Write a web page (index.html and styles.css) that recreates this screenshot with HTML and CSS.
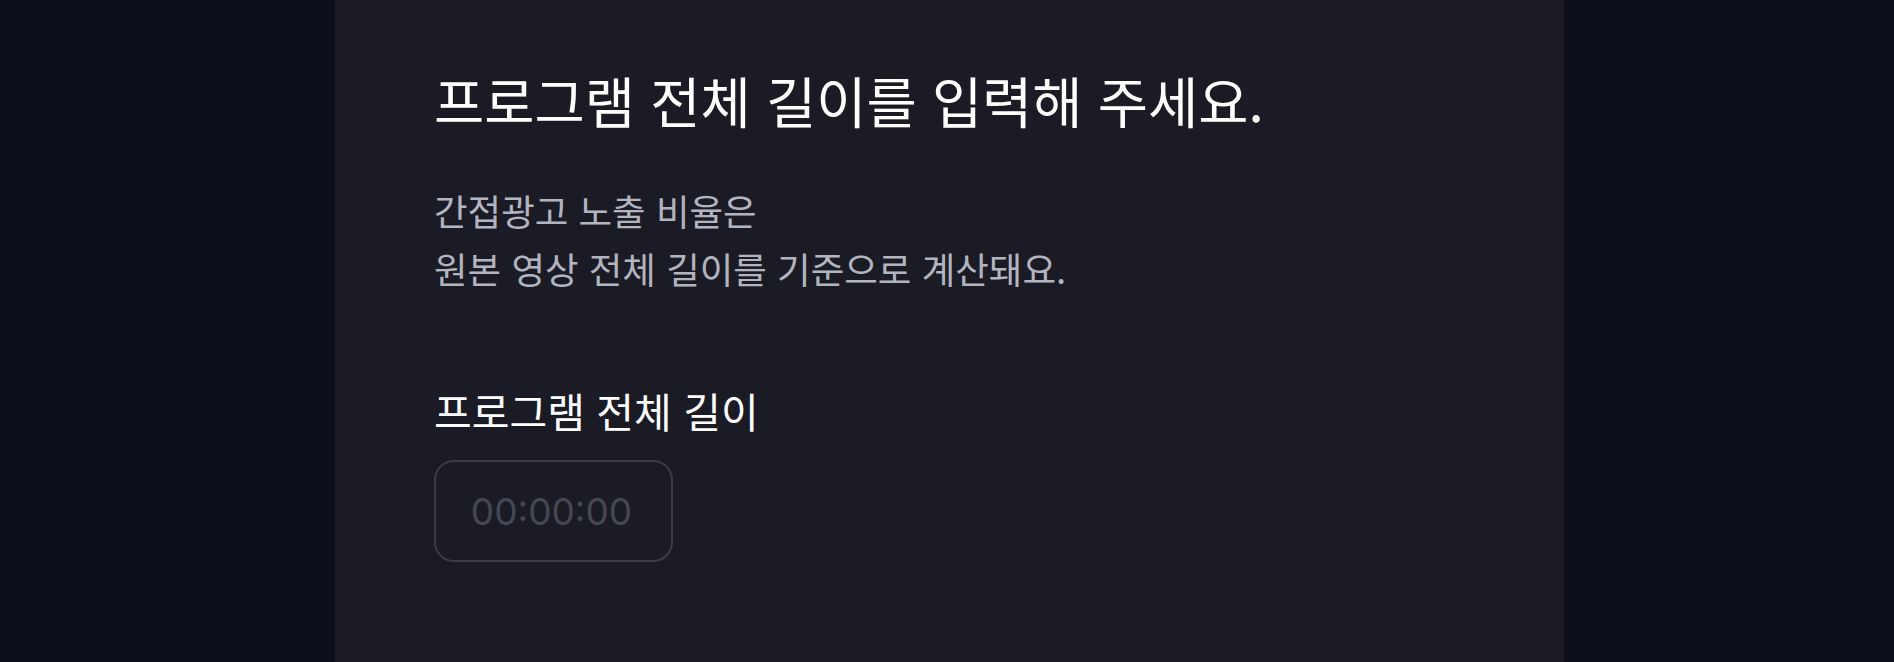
FILE: index.html
```html
<!DOCTYPE html>
<html lang="ko">
<head>
<meta charset="utf-8">
<title>프로그램 전체 길이</title>
<link rel="stylesheet" href="styles.css">
</head>
<body>
<main class="panel">
  <h1 class="title">프로그램 전체 길이를 입력해 주세요.</h1>
  <p class="desc">간접광고 노출 비율은<br>원본 영상 전체 길이를 기준으로 계산돼요.</p>
  <section class="field">
    <label class="field-label" for="duration">프로그램 전체 길이</label>
    <input class="time-input" id="duration" type="text" placeholder="00:00:00">
  </section>
</main>
</body>
</html>
```

FILE: styles.css
```css
html, body {
  margin: 0;
  padding: 0;
  height: 100%;
}
body {
  background: #0d0f1a;
  font-family: "Noto Sans CJK KR", "Noto Sans", sans-serif;
  overflow: hidden;
}
.panel {
  margin-left: 335px;
  width: 1229px;
  min-height: 100%;
  box-sizing: border-box;
  background: #1b1b26;
  padding: 65px 100px 0 99px;
  display: flex;
  flex-direction: column;
}
.title {
  margin: 0;
  font-size: 54.6px;
  font-weight: 400;
  line-height: 70px;
  color: #ffffff;
}
.desc {
  margin: 47px 0 0;
  font-size: 36.5px;
  line-height: 58px;
  color: #b2b4bf;
  font-weight: 400;
}
.field {
  margin-top: 87px;
  display: flex;
  flex-direction: column;
  align-items: flex-start;
  gap: 25px;
}
.field-label {
  font-size: 41px;
  line-height: 50px;
  font-weight: 400;
  color: #ffffff;
}
.time-input {
  width: 239px;
  height: 102px;
  box-sizing: border-box;
  border: 2px solid #393b46;
  border-radius: 20px;
  background: transparent;
  font-family: "Inter", "Noto Sans", sans-serif;
  font-size: 37px;
  color: #ffffff;
  text-align: center;
  padding: 0 4px 0 0;
  outline: none;
}
.time-input::placeholder {
  color: #454853;
}
```
